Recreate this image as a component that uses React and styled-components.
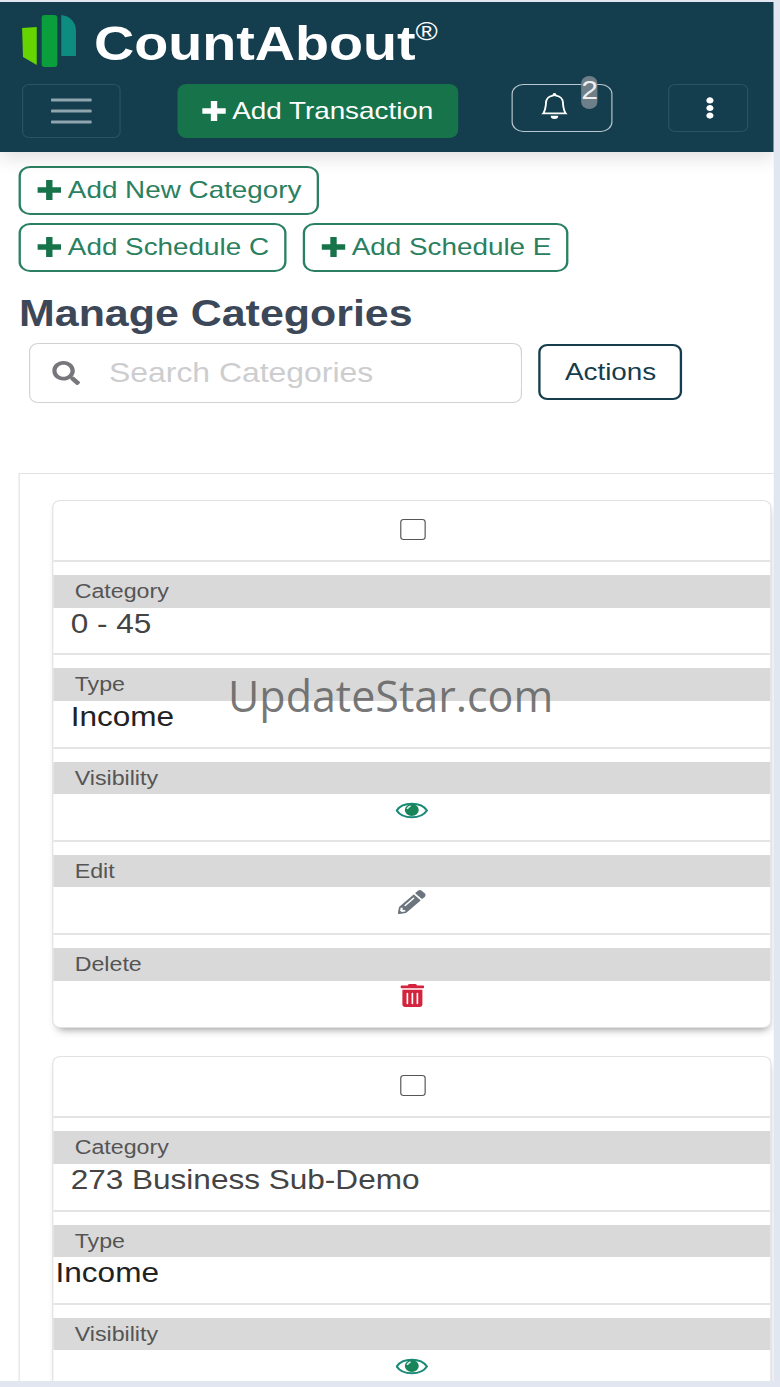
import React from "react";
import styled, { createGlobalStyle } from "styled-components";
import { FaSearch, FaPencilAlt, FaTrashAlt, FaEllipsisV } from "react-icons/fa";
import { BsBell } from "react-icons/bs";

const GlobalStyle = createGlobalStyle`
  html, body {
    margin: 0;
    padding: 0;
    background: #e1e6f0;
    font-family: "Liberation Sans", Arial, sans-serif;
  }
`;

const Stage = styled.div`
  position: relative;
  width: 780px;
  height: 1387px;
  padding-top: 2px;
  box-sizing: border-box;
  overflow: hidden;
`;

// the reference is a page stretched sideways, so all widths below are before the stretch
const Page = styled.div`
  width: 667.2px;
  height: 1379px;
  overflow: hidden;
  background: #fff;
  transform: scaleX(1.16);
  transform-origin: 0 0;
`;

const Header = styled.header`
  position: relative;
  z-index: 1;
  height: 150px;
  box-sizing: border-box;
  padding: 13px 0 0 19px;
  background: #143d4d;
  box-shadow: 0 6px 16px rgba(0, 0, 0, 0.12);
`;

const BrandRow = styled.div`
  display: flex;
  align-items: flex-start;
  height: 69px;
`;

const Brand = styled.div`
  margin-left: 15.5px;
  color: #fff;
  font-size: 48px;
  line-height: 58px;
  font-weight: 700;
  white-space: nowrap;
`;

const Registered = styled.sup`
  position: relative;
  top: -3px;
  font-size: 26px;
  font-weight: 400;
  line-height: 0;
  vertical-align: super;
`;

const NavRow = styled.div`
  display: flex;
  align-items: flex-start;
`;

const MenuButton = styled.button`
  display: flex;
  align-items: center;
  justify-content: center;
  width: 85.3px;
  height: 54px;
  padding: 0;
  background: transparent;
  border: 1px solid #2d5363;
  border-radius: 6px;
`;

const AddTransaction = styled.button`
  display: flex;
  align-items: center;
  justify-content: center;
  gap: 4.5px;
  width: 242px;
  height: 54px;
  margin-left: 48.3px;
  padding: 0 1px 0 0;
  background: #17734a;
  border: 0;
  border-radius: 8px;
  color: #fff;
  font: 400 24px "Liberation Sans", Arial, sans-serif;
`;

const BellButton = styled.button`
  position: relative;
  display: flex;
  align-items: center;
  justify-content: center;
  width: 87px;
  height: 48px;
  margin-left: 46.5px;
  padding: 0 14px 4px 0;
  box-sizing: border-box;
  background: transparent;
  border: 1.5px solid #b9c8cf;
  border-radius: 10px;
  color: #fff;
  font-size: 26px;
`;

const Badge = styled.span`
  position: absolute;
  top: -9px;
  left: 59px;
  width: 14px;
  height: 33px;
  border-radius: 8px;
  background: #6e7f89;
  color: #eee;
  font: 400 26px/28px "Liberation Sans", Arial, sans-serif;
  text-align: center;
`;

const MoreButton = styled.button`
  display: flex;
  align-items: center;
  justify-content: center;
  width: 69px;
  height: 48px;
  margin-left: 48px;
  padding: 0 0 0 2px;
  background: transparent;
  border: 1px solid #2d5363;
  border-radius: 6px;
  color: #fff;
  font-size: 22px;
`;

const Toolbar = styled.div`
  display: flex;
  flex-wrap: wrap;
  gap: 8px 14.6px;
  width: 480px;
  padding: 14px 0 0 16.4px;
`;

const OutlineButton = styled.button`
  display: flex;
  align-items: center;
  gap: 4.5px;
  height: 49px;
  padding: 0 12.6px 2px;
  background: #fff;
  border: 2px solid #2a8060;
  border-radius: 10px;
  color: #2a8060;
  font: 400 24px "Liberation Sans", Arial, sans-serif;
  white-space: nowrap;
  svg {
    color: #17734a;
  }
`;

const PlusGlyph = styled.svg`
  flex: none;
  width: 23px;
  height: 22px;
  fill: currentColor;
`;

const Title = styled.h1`
  margin: 21px 0 8px 16.4px;
  color: #3c4858;
  font-size: 37px;
  line-height: 42px;
  font-weight: 700;
`;

const SearchRow = styled.div`
  display: flex;
  align-items: flex-start;
  gap: 14.4px;
  margin-left: 25px;
`;

const SearchBox = styled.label`
  display: flex;
  align-items: center;
  gap: 25px;
  width: 425px;
  height: 60px;
  box-sizing: border-box;
  padding-left: 19px;
  border: 1.5px solid #d2d2d4;
  border-radius: 8px;
  color: #77767a;
  font-size: 24px;
`;

const SearchInput = styled.input`
  flex: 1;
  min-width: 0;
  border: 0;
  outline: 0;
  padding: 0;
  font: 400 27.5px "Liberation Sans", Arial, sans-serif;
  &::placeholder {
    color: #cdcdcf;
    opacity: 1;
  }
`;

const ActionsButton = styled.button`
  width: 124px;
  height: 56px;
  margin-top: 1px;
  padding: 0;
  background: #fff;
  border: 2px solid #143d4d;
  border-radius: 8px;
  color: #143d4d;
  font: 400 24px "Liberation Sans", Arial, sans-serif;
`;

const Panel = styled.section`
  margin: 70px 0 0 16.4px;
  padding: 27px 3.5px 0 29px;
  border-top: 1.5px solid #e2e2e2;
  border-left: 1.5px solid #e2e2e2;
`;

const Card = styled.article`
  margin-bottom: 30px;
  padding-bottom: 1px;
  border-radius: 6px;
  background: #fff;
  box-shadow: 0 0 0 1px #e2e2e2, 1px 5px 8px -3px rgba(0, 0, 0, 0.45);
`;

const CheckRow = styled.div`
  display: flex;
  align-items: center;
  justify-content: center;
  height: 59px;
  box-sizing: content-box;
  border-bottom: 2px solid #e4e4e4;
`;

const Checkbox = styled.input.attrs({ type: "checkbox" })`
  appearance: none;
  width: 22px;
  height: 21px;
  margin: 0 0 3px 2px;
  background: #fff;
  border: 1.5px solid #555;
  border-radius: 3px;
`;

const Row = styled.div`
  padding-top: 13px;
  border-bottom: ${(p) => (p.$last ? "0" : "2px solid #e4e4e4")};
`;

const Strip = styled.div`
  height: 32.5px;
  padding-left: 18px;
  background: #d9d9d9;
  color: #555;
  font-size: 20px;
  line-height: 32px;
`;

const Value = styled.div`
  height: 45.75px;
  padding-left: ${(p) => p.$indent}px;
  color: ${(p) => p.$color};
  font-size: 27.2px;
  line-height: 32px;
`;

const IconValue = styled.div`
  display: flex;
  justify-content: center;
  height: 45.75px;
  padding-top: ${(p) => p.$top}px;
  box-sizing: border-box;
  color: ${(p) => p.$color};
  font-size: ${(p) => p.$size}px;
`;

const Watermark = styled.div`
  position: absolute;
  top: 669px;
  left: 228px;
  color: rgba(95, 95, 95, 0.85);
  font: 400 43px/54px "Open Sans", sans-serif;
  pointer-events: none;
`;

const LogoMark = () => (
  <svg width="46.5" height="52" viewBox="0 0 55 52" preserveAspectRatio="none">
    <path d="M0 13 L15 12 V50 L1 42 Z" fill="#66d400" />
    <rect x="20" y="0" width="16" height="52" rx="3" fill="#0a9e3c" />
    <path d="M40 0 C50 1 55 8 55 16 V41 H40 Z" fill="#0d8c80" />
  </svg>
);

const Hamburger = () => (
  <svg width="35" height="26" viewBox="0 0 35 26">
    <g stroke="#8fa6af" strokeWidth="3" strokeLinecap="round">
      <line x1="1" y1="2" x2="34" y2="2" />
      <line x1="1" y1="13" x2="34" y2="13" />
      <line x1="1" y1="24" x2="34" y2="24" />
    </g>
  </svg>
);

const PlusIcon = () => (
  <PlusGlyph viewBox="0 0 24 24">
    <path d="M9 1h6v8h8v6h-8v8H9v-8H1V9h8z" />
  </PlusGlyph>
);

const EyeIcon = () => (
  <svg width="28" height="19" viewBox="0 0 28 19">
    <path
      d="M1 9.5C6 0.5 22 0.5 27 9.5C22 18.5 6 18.5 1 9.5Z"
      fill="#fff"
      stroke="#1a8a78"
      strokeWidth="1.8"
    />
    <circle cx="14" cy="9" r="6" fill="#17845a" />
    <path d="M10 8C10.5 6.5 11.5 5.5 13 5" stroke="#d8efe6" strokeWidth="1.4" fill="none" />
  </svg>
);

const categories = [
  { name: "0 - 45", typeIndent: 14.5, withActions: true },
  { name: "273 Business Sub-Demo", typeIndent: 1.5, withActions: false },
];

const Field = ({ label, last, children }) => (
  <Row $last={last}>
    <Strip>{label}</Strip>
    {children}
  </Row>
);

const CategoryCard = ({ category }) => (
  <Card>
    <CheckRow>
      <Checkbox readOnly />
    </CheckRow>
    <Field label="Category">
      <Value $indent={14.5} $color="#444">
        {category.name}
      </Value>
    </Field>
    <Field label="Type">
      <Value $indent={category.typeIndent} $color="#222">
        Income
      </Value>
    </Field>
    <Field label="Visibility">
      <IconValue $top={7} $size={24}>
        <EyeIcon />
      </IconValue>
    </Field>
    {category.withActions && (
      <>
        <Field label="Edit">
          <IconValue $top={3} $size={24} $color="#6c757d">
            <FaPencilAlt />
          </IconValue>
        </Field>
        <Field label="Delete" last>
          <IconValue $top={3} $size={23} $color="#d4233c">
            <FaTrashAlt />
          </IconValue>
        </Field>
      </>
    )}
  </Card>
);

export default function App() {
  return (
    <Stage>
      <GlobalStyle />
      <Page>
        <Header>
          <BrandRow>
            <LogoMark />
            <Brand>
              CountAbout<Registered>®</Registered>
            </Brand>
          </BrandRow>
          <NavRow>
            <MenuButton aria-label="Menu">
              <Hamburger />
            </MenuButton>
            <AddTransaction>
              <PlusIcon />
              Add Transaction
            </AddTransaction>
            <BellButton aria-label="Notifications">
              <BsBell />
              <Badge>2</Badge>
            </BellButton>
            <MoreButton aria-label="More">
              <FaEllipsisV />
            </MoreButton>
          </NavRow>
        </Header>
        <Toolbar>
          <OutlineButton>
            <PlusIcon />
            Add New Category
          </OutlineButton>
          <OutlineButton>
            <PlusIcon />
            Add Schedule C
          </OutlineButton>
          <OutlineButton>
            <PlusIcon />
            Add Schedule E
          </OutlineButton>
        </Toolbar>
        <Title>Manage Categories</Title>
        <SearchRow>
          <SearchBox>
            <FaSearch />
            <SearchInput placeholder="Search Categories" />
          </SearchBox>
          <ActionsButton>Actions</ActionsButton>
        </SearchRow>
        <Panel>
          {categories.map((category) => (
            <CategoryCard key={category.name} category={category} />
          ))}
        </Panel>
      </Page>
      <Watermark>UpdateStar.com</Watermark>
    </Stage>
  );
}
